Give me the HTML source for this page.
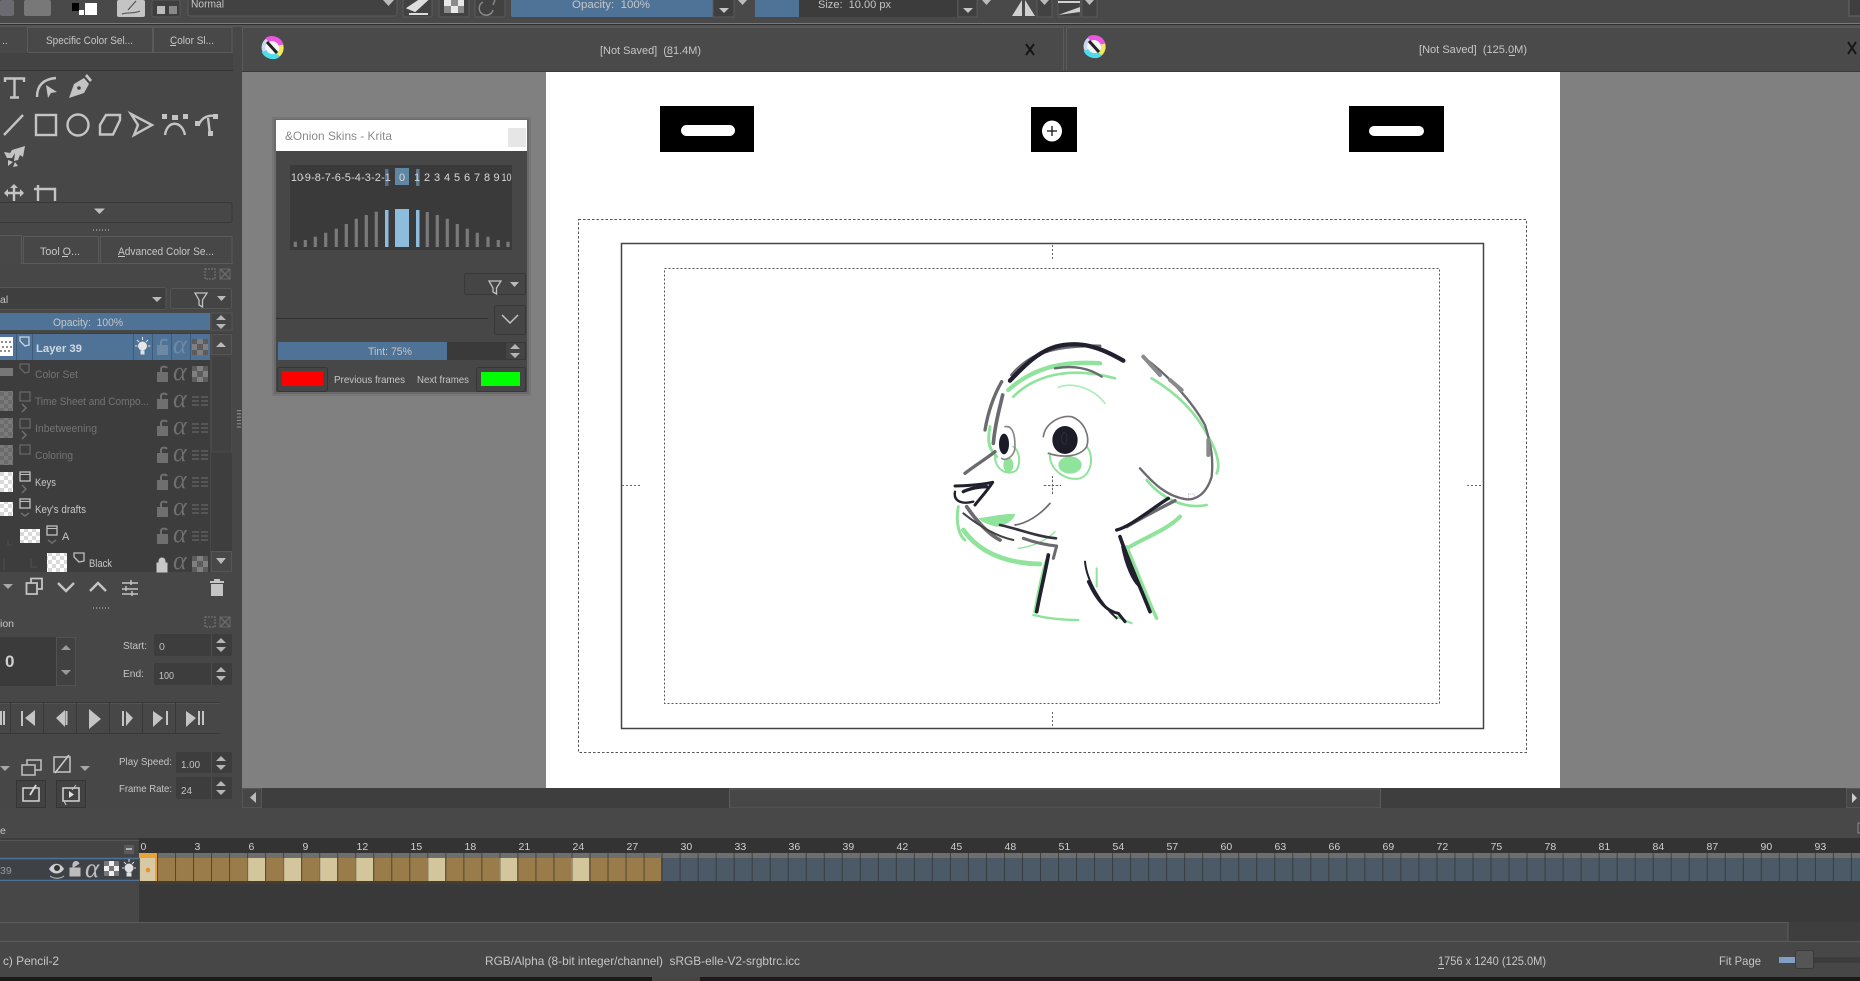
<!DOCTYPE html>
<html lang="en"><head><meta charset="utf-8"><title>Krita - Onion Skins</title>
<style>
html,body{margin:0;padding:0;background:#474747;width:1860px;height:981px;overflow:hidden}
svg{display:block}
svg.root{filter:blur(.35px)}
text{font-family:"Liberation Sans",sans-serif;font-size:11px;fill:#c6c6c6}
.d{fill:#747474}.w{fill:#d8d8d8}.s{font-size:10.5px}
.ic{fill:none;stroke:#c4c4c4;stroke-width:2.4}
.icf{fill:#c4c4c4}
.dims{fill:none;stroke:#6f6f6f;stroke-width:1.5}
.r{font-size:10.5px;fill:#cfcfcf}
.al{font-family:"Liberation Serif",serif;font-size:26px;font-style:italic;fill:#6f6f6f}
.g{fill:none;stroke:#8fe39a;stroke-linecap:round;stroke-linejoin:round}
.k{fill:none;stroke:#20202e;stroke-linecap:round;stroke-linejoin:round}
.h{fill:none;stroke:#6a6a70;stroke-linecap:round;stroke-linejoin:round}
</style></head><body>
<svg class="root" width="1860" height="981" viewBox="0 0 1860 981" xmlns="http://www.w3.org/2000/svg">
<defs>
<pattern id="chk" width="8" height="8" patternUnits="userSpaceOnUse"><rect width="8" height="8" fill="#fff"/><rect width="4" height="4" fill="#d9d9d9"/><rect x="4" y="4" width="4" height="4" fill="#d9d9d9"/></pattern>
<pattern id="chd" width="8" height="8" patternUnits="userSpaceOnUse"><rect width="8" height="8" fill="#7a7a7a"/><rect width="4" height="4" fill="#6c6c6c"/><rect x="4" y="4" width="4" height="4" fill="#6c6c6c"/></pattern>
<pattern id="cell" x="139" y="0" width="18.02" height="10" patternUnits="userSpaceOnUse"><rect x="0" width="1" height="10" fill="#2f2f2f" opacity=".7"/></pattern>
<g id="pat"><rect width="16" height="16" fill="#5c5c5c"/><rect x="5" width="6" height="5" fill="#808080"/><rect y="5" width="5" height="6" fill="#808080"/><rect x="11" y="5" width="5" height="6" fill="#808080"/><rect x="5" y="11" width="6" height="5" fill="#808080"/></g>
<g id="lines"><path d="M0 3h7M9 3h7M0 7h7M9 7h7M0 11h7M9 11h7" stroke="#666" stroke-width="1.300" fill="none"/></g>
<g id="lock"><path d="M1 6h11v10H1z" fill="#6f6f6f"/><path d="M5 6V3c0-3 5-3 6-1" fill="none" stroke="#6f6f6f" stroke-width="2"/></g>
<g id="lock2"><path d="M1 6h11v10H1z" fill="#6f89a5"/><path d="M5 6V3c0-3 5-3 6-1" fill="none" stroke="#6f89a5" stroke-width="2"/></g>
<g id="logo"><circle r="9.500" fill="#f4f4f4"/><path d="M-5-8A9.500 9.500 0 0 1 9-3" stroke="#ec55dd" stroke-width="5" fill="none"/><path d="M9-3A9.500 9.500 0 0 1 6 7" stroke="#f0e860" stroke-width="4.500" fill="none"/><path d="M6 7A9.500 9.500 0 0 1-8 3" stroke="#4fdcea" stroke-width="5" fill="none"/><path d="M-8 3A9.500 9.500 0 0 1-5-8" stroke="#c9d8ef" stroke-width="3.500" fill="none"/><path d="M-5-6L5 5" stroke="#222" stroke-width="3"/></g>
<g id="dots"><path d="M0 0h1M3 0h1M6 0h1M9 0h1M12 0h1M15 0h1" stroke="#8a8a8a" stroke-width="2"/></g>
<g id="float"><rect x="-5" y="-5" width="10" height="10" fill="none" stroke="#6a6a6a" stroke-width="1.500" stroke-dasharray="2 1"/><path d="M10-5L20 5M20-5L10 5" stroke="#6a6a6a" stroke-width="1.500"/><rect x="10" y="-5" width="10" height="10" fill="none" stroke="#6a6a6a"/></g>
<g id="spin"><path d="M-5-2L0-7L5-2zM-5 2L0 7L5 2z" fill="#b5b5b5"/></g>
</defs>

<!-- base -->
<rect width="1860" height="981" fill="#474747"/>

<!-- canvas surround -->
<rect x="242" y="72" width="1618" height="716" fill="#808080"/>
<rect x="546" y="72" width="1014" height="716" fill="#fff"/>

<!-- top toolbar -->
<rect width="1860" height="23" fill="#494949"/>
<rect y="23" width="1860" height="1" fill="#7a7a7a"/>
<rect y="24" width="1860" height="1" fill="#2f2f2f"/>
<rect y="25" width="1860" height="2" fill="#555"/>
<rect x="0" y="0" width="14" height="16" rx="2" fill="#6a6a70"/>
<rect x="24" y="0" width="27" height="16" rx="2" fill="#787878"/>
<rect x="72" y="3" width="7" height="8" fill="#000"/><rect x="79" y="10" width="5" height="5" fill="#fff"/><rect x="85" y="3" width="12" height="12" fill="#fff"/>
<rect x="117" y="0" width="28" height="17" rx="2" fill="#c4c4c4"/><path d="M122 14c6-2 12 0 18-3M128 10L136 1" stroke="#555" fill="none" stroke-width="1.200"/>
<rect x="152" y="0" width="28" height="17" rx="2" fill="#3f3f3f" stroke="#5a5a5a"/><rect x="157" y="6" width="8" height="8" fill="#bbb"/><rect x="169" y="6" width="8" height="8" fill="#888"/>
<rect x="188" y="-1" width="209" height="17" rx="2" fill="#424242" stroke="#5a5a5a"/>
<text x="191" y="7.500" textLength="33" lengthAdjust="spacingAndGlyphs">Normal</text>
<path d="M383 0h11l-5.500 6z" fill="#bbb"/>
<rect x="403" y="-1" width="29" height="18" rx="2" fill="#424242" stroke="#5a5a5a"/><path d="M408 8L420 0h7L415 11zM409 14h19" stroke="#ddd" stroke-width="2" fill="#ddd"/>
<rect x="439" y="-1" width="30" height="18" rx="2" fill="#424242" stroke="#5a5a5a"/><path d="M444 0h7v6h-7zM458 0h6v6h-6zM451 6h7v7h-7z" fill="#e8e8e8"/><path d="M451 0h7v6h-7zM444 6h7v7h-7zM458 6h6v7h-6z" fill="#8a8a8a"/>
<rect x="475" y="-1" width="30" height="18" rx="2" fill="#424242" stroke="#5a5a5a"/><path d="M483 2a7 7 0 1 0 10 8M493 5l2-5" stroke="#888" fill="none" stroke-width="1.500"/>
<rect x="511" y="-1" width="202" height="18" rx="2" fill="#4f7396"/>
<rect x="713" y="-1" width="21" height="18" fill="#3f3f3f" stroke="#5a5a5a"/><path d="M719 8h10l-5 5z" fill="#c5c5c5"/>
<text x="572" y="8" textLength="78" lengthAdjust="spacingAndGlyphs" fill="#e0e0e0">Opacity:&#160;&#160;100%</text>
<path d="M738 0h9l-4.500 5z" fill="#bbb"/>
<rect x="755" y="-1" width="44" height="18" fill="#4f7396"/>
<rect x="799" y="-1" width="158" height="18" fill="#3c3c3c"/>
<rect x="958" y="-1" width="19" height="18" fill="#3f3f3f" stroke="#5a5a5a"/><path d="M963 8h10l-5 5z" fill="#c5c5c5"/>
<text x="818" y="8" textLength="73" lengthAdjust="spacingAndGlyphs">Size:&#160;&#160;10.00 px</text>
<path d="M982 0h9l-4.500 5z" fill="#bbb"/>
<path d="M1012 16L1022 0V16zM1025 0L1035 16H1025z" fill="#d0d0d0"/>
<rect x="1037" y="-1" width="15" height="18" fill="#424242" stroke="#5a5a5a"/><path d="M1040 0h9l-4.500 5z" fill="#bbb"/>
<rect x="1058" y="-1" width="22" height="18" fill="#424242" stroke="#5a5a5a"/><path d="M1058 15L1080 7V12zM1058 1H1080V3H1058z" fill="#d0d0d0"/>
<rect x="1082" y="-1" width="15" height="18" fill="#424242" stroke="#5a5a5a"/><path d="M1085 0h9l-4.500 5z" fill="#bbb"/>
<rect x="1849" y="-1" width="14" height="17" fill="#3f3f3f" stroke="#666"/>

<!-- left docker tabs -->
<rect x="0" y="27" width="233" height="26" fill="#484848"/>
<path d="M27.500 27V52M152.500 27V52M153.500 27V52" stroke="#5a5a5a"/>
<path d="M28 27.500H232V52.500H28" stroke="#5a5a5a" fill="none"/>
<rect x="0" y="53" width="233" height="17" fill="#434343"/>
<path d="M0 70.500H233" stroke="#333"/>
<text x="46" y="44" textLength="87" lengthAdjust="spacingAndGlyphs">Specific Color Sel...</text>
<text x="170" y="44" textLength="44" lengthAdjust="spacingAndGlyphs">Color Sl...</text>
<path d="M170 45.500h6" stroke="#c6c6c6"/>
<text x="2" y="44" class="s">..</text>

<!-- doc tabs -->
<rect x="242" y="27" width="1618" height="45" fill="#4a4a4a"/>
<path d="M242.500 72V27.500H1063.500V72M1066.500 72V27.500H1860" fill="none" stroke="#5a5a5a"/>
<path d="M242 71.500H1860" stroke="#3a3a3a"/>
<use href="#logo" transform="translate(272 48)"/>
<use href="#logo" transform="translate(1094 47)"/>
<text x="600" y="54" textLength="101" lengthAdjust="spacingAndGlyphs">[Not Saved]&#160;&#160;(81.4M)</text>
<path d="M665.500 56.500h7" stroke="#c6c6c6"/>
<text x="1419" y="53" textLength="108" lengthAdjust="spacingAndGlyphs">[Not Saved]&#160;&#160;(125.0M)</text>
<path d="M1509 55.500h6" stroke="#c6c6c6"/>
<path d="M1026 44L1034 55M1034 44L1026 55" stroke="#161616" stroke-width="2"/>
<path d="M1848 42L1856 54M1856 42L1848 54" stroke="#161616" stroke-width="2"/>

<!-- tool icons -->
<path class="ic" d="M5 82V78.500H24V82M14.500 78.500V97M10 97.500H19"/>
<path class="ic" d="M37 97C37 85 44 79 56 78"/><path class="icf" d="M46 85L57 92L51 93L48 98z"/>
<path class="icf" d="M69 98L74 84L84 78L89 84L84 93zM85 76L90 82L92 80L87 74z"/><circle cx="79" cy="88" r="1.800" fill="#444"/>
<path class="ic" d="M4 135L23 115"/>
<rect class="ic" x="36" y="115" width="20" height="20"/>
<circle class="ic" cx="78" cy="125" r="10.500"/>
<path class="ic" d="M100 134.500H113L120 120V115H106L100 125z"/>
<path class="ic" d="M131 114L152 125L134 135L138 125z"/>
<path class="ic" d="M165 135C167 120 182 120 185 135"/><path class="icf" d="M162 114h5v5h-5zM172 115h6v5h-6zM183 114h5v5h-5z"/>
<path class="ic" d="M199 124C203 116 210 115 215 116M208 118L210 134"/><path class="icf" d="M195 121h5v5h-5zM213 114h5v5h-5zM208 131h5v5h-5z"/>
<path class="icf" d="M25 146L12 150L7 158L12 158L15 153L14 161L18 160L20 155L23 157zM4 152l6 1-3 5zM8 160l5 2-5 4zM15 162l3 4-5 1z"/>
<path class="ic" d="M14 185V201M5 193H23"/><path class="icf" d="M14 184l4 4h-8zM4 193l4-4v8zM24 193l-4-4v8z"/>
<path class="ic" d="M38 185V201M34 189H55V201"/>

<!-- scroll button -->
<rect x="-2" y="202.500" width="234" height="20" rx="2" fill="#474747" stroke="#383838"/>
<path d="M94 208.500h11l-5.500 5.500z" fill="#bdbdbd"/>
<use href="#dots" transform="translate(93 230)"/>

<!-- second tabs -->
<rect x="0" y="263" width="233" height="1" fill="#5a5a5a"/>
<path d="M21.500 263V235.500H0M23.500 263V236.500H98.500V263M100.500 263V236.500H232V263" stroke="#5a5a5a" fill="none"/>
<rect x="0" y="236" width="21" height="28" fill="#484848"/>
<text x="40" y="255" textLength="40" lengthAdjust="spacingAndGlyphs">Tool O...</text>
<text x="118" y="255" textLength="96" lengthAdjust="spacingAndGlyphs">Advanced Color Se...</text>
<path d="M118 256.500h7M62 256.500h6" stroke="#c6c6c6"/>
<use href="#float" transform="translate(210 274)"/>

<!-- combo -->
<rect x="-2" y="287.500" width="168" height="22" rx="2" fill="#3f3f3f" stroke="#555"/>
<text x="0" y="303" class="s">al</text>
<path d="M152 297h10l-5 5z" fill="#bbb"/>
<rect x="170.500" y="288.500" width="61" height="20" rx="2" fill="#444" stroke="#555"/>
<path d="M195 293H207L202.500 300V307L199 305V300z" fill="none" stroke="#c2c2c2" stroke-width="1.300"/>
<path d="M217 296h9l-4.500 5z" fill="#bbb"/>

<!-- opacity -->
<rect x="0" y="313" width="210" height="17" fill="#4f7396"/>
<rect x="211" y="313" width="21" height="17" fill="#444" stroke="#555"/>
<use href="#spin" transform="translate(221 322)"/>
<text x="53" y="326" textLength="70" lengthAdjust="spacingAndGlyphs" fill="#e0e0e0">Opacity:&#160;&#160;100%</text>

<!-- layer list -->
<rect x="0" y="333" width="210" height="239" fill="#3d3d3d"/>
<rect x="0" y="334" width="210" height="26" fill="#4f7396"/>
<path d="M16.500 334V360M32.500 334V360M133.500 334V360M152.500 334V360M171.500 334V360M190.500 334V360" stroke="#3d5a78"/>
<rect x="211" y="333" width="21" height="239" fill="#3e3e3e"/>
<rect x="211.500" y="334.500" width="20" height="20" fill="#484848" stroke="#555"/><path d="M216 347h10l-5-5z" fill="#bbb"/>
<rect x="211.500" y="356" width="20" height="96" fill="#414141" stroke="#4a4a4a"/>
<rect x="211.500" y="551.500" width="20" height="20" fill="#484848" stroke="#555"/><path d="M216 558h10l-5 6z" fill="#bbb"/>
<rect x="0" y="337" width="13" height="19" fill="#fff"/><path d="M1 342h11M2 347h10M0 351h12" stroke="#222" stroke-dasharray="2 2"/>
<rect x="0" y="368" width="13" height="8" fill="#777"/>
<rect x="0" y="391" width="13" height="20" fill="url(#chd)"/>
<rect x="0" y="418" width="13" height="20" fill="url(#chd)"/>
<rect x="0" y="445" width="13" height="20" fill="url(#chd)"/>
<rect x="0" y="472" width="13" height="20" fill="url(#chk)"/>
<rect x="0" y="502" width="13" height="14" fill="url(#chk)"/>
<rect x="20" y="529" width="20" height="14" fill="url(#chk)"/>
<rect x="47" y="553" width="20" height="19" fill="url(#chk)"/>
<!-- layer icons -->
<path d="M20 337H29V345L25 346L20 341z" fill="none" stroke="#c8d4e0" stroke-width="1.300"/>
<path d="M20 364H29V372L25 373L20 368z" fill="none" stroke="#666" stroke-width="1.300"/>
<rect x="20" y="392" width="10" height="9" fill="none" stroke="#666" stroke-width="1.300"/><path d="M22 404l4 4-4 4" class="dims"/>
<rect x="20" y="419" width="10" height="9" fill="none" stroke="#666" stroke-width="1.300"/><path d="M22 431l4 4-4 4" class="dims"/>
<rect x="20" y="445" width="10" height="9" fill="none" stroke="#666" stroke-width="1.300"/>
<rect x="20" y="472" width="10" height="9" fill="none" stroke="#c0c0c0" stroke-width="1.300"/><path d="M20 474.500H30" stroke="#c0c0c0"/><path d="M22 485l4 4-4 4" class="dims"/>
<rect x="20" y="499" width="10" height="9" fill="none" stroke="#c0c0c0" stroke-width="1.300"/><path d="M20 501.500H30" stroke="#c0c0c0"/><path d="M21 513l4 3 4-3" class="dims"/>
<rect x="47" y="526" width="10" height="9" fill="none" stroke="#c0c0c0" stroke-width="1.300"/><path d="M47 528.500H57" stroke="#c0c0c0"/><path d="M48 540l4 3 4-3" class="dims"/>
<path d="M74 553H84V561L79 562L74 557z" fill="none" stroke="#c0c0c0" stroke-width="1.300"/>
<path d="M8 540V545H12M4 558V570M31 558V567H37" stroke="#4e4e4e" fill="none"/>
<!-- layer labels -->
<text x="36" y="352" textLength="46" lengthAdjust="spacingAndGlyphs" style="font-weight:bold;font-size:11px;fill:#d0d8e0">Layer 39</text>
<text x="35" y="378" class="d" textLength="43" lengthAdjust="spacingAndGlyphs">Color Set</text>
<text x="35" y="405" class="d" textLength="114" lengthAdjust="spacingAndGlyphs">Time Sheet and Compo...</text>
<text x="35" y="432" class="d" textLength="62" lengthAdjust="spacingAndGlyphs">Inbetweening</text>
<text x="35" y="459" class="d" textLength="38" lengthAdjust="spacingAndGlyphs">Coloring</text>
<text x="35" y="486" textLength="21" lengthAdjust="spacingAndGlyphs">Keys</text>
<text x="35" y="513" textLength="51" lengthAdjust="spacingAndGlyphs">Key's drafts</text>
<text x="62" y="540">A</text>
<text x="89" y="567" textLength="23" lengthAdjust="spacingAndGlyphs">Black</text>
<!-- row icons -->
<circle cx="142.500" cy="346" r="4.500" fill="#e6e6e6"/><path d="M141 351h3v3h-3zM142.500 337v3M135 346h2.500M148 346h2.500M137 340l2 2M148 340l-2 2" stroke="#e0e0e0" fill="#e0e0e0"/>
<use href="#lock2" transform="translate(156 339)"/>
<text x="173" y="353" class="al" style="fill:#6f89a5">α</text>
<use href="#pat" transform="translate(192 339)"/>
<use href="#lock" transform="translate(156 366)"/><text x="173" y="380" class="al">α</text><use href="#pat" transform="translate(192 366)"/>
<use href="#lock" transform="translate(156 393)"/><text x="173" y="407" class="al">α</text><use href="#lines" transform="translate(192 394)"/>
<use href="#lock" transform="translate(156 420)"/><text x="173" y="434" class="al">α</text><use href="#lines" transform="translate(192 421)"/>
<use href="#lock" transform="translate(156 447)"/><text x="173" y="461" class="al">α</text><use href="#lines" transform="translate(192 448)"/>
<use href="#lock" transform="translate(156 474)"/><text x="173" y="488" class="al">α</text><use href="#lines" transform="translate(192 475)"/>
<use href="#lock" transform="translate(156 501)"/><text x="173" y="515" class="al">α</text><use href="#lines" transform="translate(192 502)"/>
<use href="#lock" transform="translate(156 528)"/><text x="173" y="542" class="al">α</text><use href="#lines" transform="translate(192 529)"/>
<path d="M157 563h10v9h-10zM159 563v-2a3 3 0 0 1 6 0v2" fill="#c8c8c8" stroke="#c8c8c8"/><text x="173" y="569" class="al">α</text><use href="#pat" transform="translate(192 556)"/>

<!-- layer buttons -->
<path d="M3 584h10l-5 5z" fill="#a8a8a8"/>
<path class="ic" d="M31 583V578.500H42V589H37M26.500 583H37V594H26.500z" style="stroke-width:1.800"/>
<path class="ic" d="M58 583L66 591L74 583"/>
<path class="ic" d="M90 591L98 583L106 591"/>
<path class="ic" d="M122 583H138M122 589H138M122 594H138" style="stroke-width:1.600"/><path d="M131 580v5M126 586v5M132 591v5" stroke="#c4c4c4" stroke-width="1.500"/>
<path class="icf" d="M210 581h14v2h-14zM214 579h6v2h-6zM211 584h12v12h-12z"/>
<use href="#dots" transform="translate(93 608)"/>

<!-- animation -->
<text x="0" y="627" class="s">ion</text>
<use href="#float" transform="translate(210 622)"/>
<rect x="0" y="637" width="56" height="49" fill="#3b3b3b"/>
<text x="5" y="667" style="font-size:17px;font-weight:bold;fill:#cfcfcf">0</text>
<rect x="56.500" y="637.500" width="19" height="48" fill="#414141" stroke="#525252"/>
<path d="M61 650h10l-5-5zM61 670h10l-5 5z" fill="#9a9a9a"/>
<text x="123" y="649" textLength="24" lengthAdjust="spacingAndGlyphs" class="s">Start:</text>
<rect x="154" y="634" width="78" height="22" rx="2" fill="#3d3d3d"/>
<text x="159" y="650" class="s" style="fill:#bbb">0</text>
<use href="#spin" transform="translate(221 645)"/>
<path d="M211.500 634V656" stroke="#4d4d4d"/>
<text x="123" y="677" textLength="21" lengthAdjust="spacingAndGlyphs" class="s">End:</text>
<rect x="154" y="663" width="78" height="22" rx="2" fill="#3d3d3d"/>
<text x="159" y="679" textLength="15" lengthAdjust="spacingAndGlyphs" class="s">100</text>
<use href="#spin" transform="translate(221 674)"/>
<path d="M211.500 663V685" stroke="#4d4d4d"/>

<!-- playback -->
<path d="M0 702.500H220M0 733.500H220" stroke="#383838"/>
<path d="M0 703.500H220" stroke="#545454"/>
<path d="M10.500 703V733M43.500 703V733M76.500 703V733M109.500 703V733M142.500 703V733M175.500 703V733" stroke="#383838"/>
<path class="icf" d="M0 711h2v14h-2zM3 711h2v14h-2zM21 711h2v15h-2zM35 710V726L25 718zM56 718L65 710V727zM65.500 711H67.500V725H65.500zM89 709V729L101 719zM122 711H124V726H122zM126 711L133 718L126 726zM153 711L163 718L153 727zM166 711H168V725H166zM186 711L196 718L186 727zM198 711H200V725H198zM202 711H204V725H202z"/>

<!-- play options -->
<path d="M0 766h10l-5 5z" fill="#a8a8a8"/>
<rect x="27" y="760" width="14" height="10" fill="none" stroke="#bbb" stroke-width="1.600"/><rect x="22" y="765" width="13" height="10" fill="#474747" stroke="#bbb" stroke-width="1.600"/>
<rect x="54" y="757" width="16" height="15" fill="none" stroke="#bbb" stroke-width="1.600"/><path d="M55 773L69 755" stroke="#ccc" stroke-width="1.500"/>
<path d="M80 766h10l-5 5z" fill="#a8a8a8"/>
<rect x="16.500" y="780.500" width="29" height="27" fill="#424242" stroke="#353535"/>
<rect x="56.500" y="780.500" width="29" height="27" fill="#424242" stroke="#353535"/>
<rect x="23" y="788" width="16" height="13" fill="none" stroke="#ccc" stroke-width="1.600"/><path d="M30 795L36 785" stroke="#ddd" stroke-width="1.800"/>
<rect x="63" y="788" width="16" height="13" fill="none" stroke="#ccc" stroke-width="1.600"/><path d="M69 791L74 794.500L69 798z" fill="#ddd"/><path d="M72 790L76 785M64 801L66 805" stroke="#ccc"/>
<text x="119" y="765" textLength="53" lengthAdjust="spacingAndGlyphs" class="s">Play Speed:</text>
<rect x="176" y="752" width="56" height="21" rx="2" fill="#3d3d3d"/>
<text x="181" y="768" textLength="19" lengthAdjust="spacingAndGlyphs" class="s">1.00</text>
<use href="#spin" transform="translate(221 763)"/><path d="M211.500 752V773" stroke="#4d4d4d"/>
<text x="119" y="792" textLength="53" lengthAdjust="spacingAndGlyphs" class="s">Frame Rate:</text>
<rect x="176" y="777" width="56" height="22" rx="2" fill="#3d3d3d"/>
<text x="181" y="794" textLength="11" lengthAdjust="spacingAndGlyphs" class="s">24</text>
<use href="#spin" transform="translate(221 788)"/><path d="M211.500 777V799" stroke="#4d4d4d"/>
<use href="#dots" transform="translate(238 410) rotate(90) scale(1.100)"/>
<use href="#dots" transform="translate(240 410) rotate(90) scale(1.100)"/>

<!-- canvas contents -->
<rect x="660" y="106" width="94" height="46" fill="#000"/><rect x="681" y="125" width="54" height="11" rx="5.500" fill="#fff"/>
<rect x="1031" y="107" width="46" height="45" fill="#000"/><ellipse cx="1052" cy="131" rx="10" ry="10.500" fill="#fff"/><path d="M1047 131H1057M1052 126V136" stroke="#111" stroke-width="1.300"/>
<rect x="1349" y="106" width="95" height="46" fill="#000"/><rect x="1369" y="126" width="55" height="10" rx="5" fill="#fff"/>
<rect x="578.500" y="219.500" width="948" height="533" fill="none" stroke="#555" stroke-dasharray="2.500 2"/>
<rect x="621.500" y="243.500" width="862" height="485" fill="none" stroke="#444" stroke-width="1.500"/>
<rect x="664.500" y="268.500" width="775" height="435" fill="none" stroke="#555" stroke-dasharray="2 2"/>
<path d="M1052.500 245V260M1052.500 712V727M622 485.500H640M1467 485.500H1483M1052.500 476V494M1044 485.500H1061" stroke="#666" stroke-dasharray="2 2"/>

<!-- drawing -->
<svg x="930" y="310" width="320" height="330" viewBox="0 0 960 990">
<g class="g">
<path d="M235 240C290 190 370 150 510 160" stroke-width="13"/>
<path d="M250 260C320 190 430 170 555 205" stroke-width="8"/>
<path d="M385 232C430 215 490 235 525 280" stroke-width="5" opacity=".7"/>
<path d="M180 350C170 400 180 420 200 440" stroke-width="9"/>
<path d="M195 440C195 480 235 500 260 480C275 450 265 420 250 410" stroke-width="6"/>
<path d="M360 430C355 480 410 515 450 505C490 490 490 430 470 410" stroke-width="6"/>
<path d="M665 205C740 250 800 310 835 380C865 430 870 470 860 490" stroke-width="8"/>
<path d="M650 510C690 560 760 600 830 585" stroke-width="8"/>
<path d="M600 710C650 680 710 660 750 620" stroke-width="12"/>
<path d="M85 590C75 640 90 680 105 690" stroke-width="9"/>
<path d="M100 660C150 730 230 760 330 762" stroke-width="14"/>
<path d="M265 715C310 710 350 690 375 665" stroke-width="4"/>
<path d="M350 750C330 810 320 880 315 905" stroke-width="10"/>
<path d="M310 915C350 925 400 930 445 930" stroke-width="7"/>
<path d="M590 710C620 780 650 860 680 925" stroke-width="10"/>
<path d="M500 775L500 830M560 920L605 940" stroke-width="6"/>
</g>
<ellipse cx="235" cy="465" rx="15" ry="22" fill="#8fe39a"/>
<ellipse cx="420" cy="465" rx="35" ry="26" fill="#8fe39a"/>
<path d="M145 625C180 620 230 610 255 612C255 630 220 650 200 650C180 645 160 640 145 625z" fill="#8fe39a"/>
<g class="h">
<path d="M245 195C300 130 370 105 510 108" stroke-width="9"/>
<path d="M375 175C430 165 480 175 515 200" stroke-width="7"/>
<path d="M165 360C175 300 195 250 215 215" stroke-width="10"/>
<path d="M190 400C195 340 210 290 218 255" stroke-width="11"/>
<path d="M225 350C250 345 255 380 255 410C255 440 225 455 215 445" stroke-width="5" stroke="#888"/>
<path d="M340 380C345 340 390 315 425 320C465 335 480 380 470 410C450 440 400 445 355 430" stroke-width="5" stroke="#777"/>
<path d="M105 490C130 470 170 445 195 425" stroke-width="10"/>
<path d="M110 590C130 620 170 670 210 690" stroke-width="11"/>
<path d="M255 645C290 640 330 615 360 580" stroke-width="5"/>
<path d="M280 685C320 700 350 705 380 708L370 745" stroke-width="9"/>
<path d="M630 475C670 520 710 560 770 568C800 570 830 550 845 500C850 450 845 410 825 345C790 280 720 200 645 145" stroke-width="7"/>
<path d="M640 140L690 195M720 210L755 240M835 390L835 435" stroke-width="12" stroke="#8a8a8a"/>
<path d="M590 650C640 620 700 590 735 572" stroke-width="10"/>
</g>
<g class="k">
<path d="M240 212C280 170 330 115 400 105C450 98 500 105 580 152" stroke-width="13"/>
<path d="M75 528C100 528 150 525 188 517C170 545 150 565 135 585" stroke-width="9"/>
<path d="M75 545C70 570 90 585 130 575" stroke-width="7"/>
<path d="M100 545C120 535 150 530 170 530" stroke-width="10"/>
<path d="M100 610C150 650 200 680 250 690" stroke-width="6" stroke="#444"/>
<path d="M210 645C260 655 320 680 378 685" stroke-width="8" stroke="#33333f"/>
<path d="M355 735C345 790 330 850 320 905" stroke-width="11"/>
<path d="M560 660C600 650 660 600 715 565" stroke-width="10"/>
<path d="M570 680C590 740 630 830 660 905" stroke-width="11"/>
<path d="M578 710C590 770 610 810 625 825" stroke-width="9"/>
<path d="M465 755C470 810 510 880 560 925" stroke-width="6"/>
<path d="M475 815C500 870 530 905 565 910L585 935" stroke-width="9"/>
</g>
<ellipse cx="222" cy="402" rx="15" ry="31" fill="#1a1a28"/>
<ellipse cx="405" cy="390" rx="38" ry="42" fill="#1c1c28"/>
<ellipse cx="403" cy="385" rx="8" ry="18" fill="none" stroke="#555"/>
<rect x="775" y="552" width="18" height="16" fill="none" stroke="#654f80" stroke-dasharray="3 2"/>
<path d="M367 500V555M340 527H395" stroke="#555" stroke-dasharray="4 3"/>
</svg>

<!-- onion skin dialog -->
<rect x="272" y="117" width="259" height="279" fill="#000" opacity=".08"/>
<rect x="274" y="119" width="255" height="275" fill="#000" opacity=".1"/>
<rect x="276" y="151" width="251" height="241" fill="#474747"/>
<rect x="276" y="120" width="251" height="31" fill="#fff"/>
<text x="285" y="140" textLength="107" lengthAdjust="spacingAndGlyphs" style="font-size:12px;fill:#8a8a8a">&amp;Onion Skins - Krita</text>
<rect x="508" y="128" width="18" height="19" fill="#e6e6e6"/>
<rect x="290" y="165" width="222" height="85" fill="#3a3a3a"/>
<rect x="385" y="169" width="3.500" height="17" fill="#4f7396"/>
<rect x="395" y="168" width="14" height="17" fill="#5d87a3"/>
<rect x="416" y="169" width="3.500" height="17" fill="#5d7a90"/>
<g style="text-anchor:middle">
<text x="297" y="181" class="w">10</text>
<text x="306" y="181" class="w">-9</text><text x="316" y="181" class="w">-8</text><text x="326" y="181" class="w">-7</text><text x="336" y="181" class="w">-6</text><text x="346" y="181" class="w">-5</text><text x="356" y="181" class="w">-4</text><text x="366" y="181" class="w">-3</text><text x="376" y="181" class="w">-2</text><text x="386" y="181" class="w">-1</text><text x="402" y="181" class="w">0</text><text x="417" y="181" class="w">1</text><text x="427" y="181" class="w">2</text><text x="437" y="181" class="w">3</text><text x="447" y="181" class="w">4</text><text x="457" y="181" class="w">5</text><text x="467" y="181" class="w">6</text><text x="477" y="181" class="w">7</text><text x="487" y="181" class="w">8</text><text x="496.500" y="181" class="w">9</text><text x="506.500" y="181" class="w" textLength="10" lengthAdjust="spacingAndGlyphs">10</text>
</g>
<path d="M295.300 247V241.700M305.300 247V240M315.300 247V236.700M325.700 247V232.700M336.300 247V228.700M346.300 247V224M356.300 247V218.700M366.300 247V215M376.300 247V211.700M427.300 247V212M437.300 247V215M447.300 247V218.700M457.300 247V224M467.300 247V228.700M477.300 247V232.700M488 247V236.700M498.300 247V240M508 247V241.700" stroke="#7a7a7a" stroke-width="3.200" fill="none"/>
<rect x="385" y="210" width="3.500" height="37" fill="#8ebcdc"/>
<rect x="395" y="209" width="14" height="38" fill="#8ebcdc"/>
<rect x="416" y="210" width="3.500" height="37" fill="#8ebcdc"/>
<rect x="464.500" y="273.500" width="61" height="21" rx="2" fill="#454545" stroke="#383838"/>
<path d="M489 281H501L496.500 288V294L493 292V288z" fill="none" stroke="#c2c2c2" stroke-width="1.300"/>
<path d="M510 282h9l-4.500 5z" fill="#bbb"/>
<path d="M276 318.500H488" stroke="#2e2e2e"/>
<rect x="494.500" y="305.500" width="31" height="29" rx="2" fill="#454545" stroke="#383838"/>
<path d="M502 315L510 323L518 315" fill="none" stroke="#c4c4c4" stroke-width="1.500"/>
<rect x="278" y="342" width="169" height="18" fill="#4f7396"/>
<rect x="447" y="342" width="58" height="18" fill="#3a3a3a"/>
<rect x="505.500" y="342.500" width="20" height="17" fill="#444" stroke="#383838"/>
<use href="#spin" transform="translate(515 351)"/>
<text x="368" y="355" textLength="44" lengthAdjust="spacingAndGlyphs" fill="#e0e0e0">Tint: 75%</text>
<rect x="277.500" y="367.500" width="50" height="24" rx="2" fill="#454545" stroke="#363636"/>
<rect x="282" y="371" width="41" height="15" fill="#f00"/>
<rect x="476.500" y="367.500" width="49" height="24" rx="2" fill="#454545" stroke="#363636"/>
<rect x="481" y="372" width="39" height="14" fill="#0f0"/>
<text x="334" y="383" textLength="71" lengthAdjust="spacingAndGlyphs" class="s">Previous frames</text>
<text x="417" y="383" textLength="52" lengthAdjust="spacingAndGlyphs" class="s">Next frames</text>

<!-- horizontal canvas scrollbar -->
<rect x="242" y="788" width="1618" height="20" fill="#3e3e3e"/>
<rect x="242.500" y="788.500" width="19" height="19" fill="#464646" stroke="#565656"/><path d="M256 792v11l-6-5.500z" fill="#bbb"/>
<rect x="729.500" y="789" width="651" height="19" fill="#474747" stroke="#5c5c5c"/>
<rect x="1846.500" y="788.500" width="14" height="19" fill="#464646" stroke="#565656"/><path d="M1852 793v10l5-5z" fill="#ccc"/>
<use href="#dots" transform="translate(920 814)"/>

<!-- timeline -->
<rect x="0" y="808" width="1860" height="30" fill="#484848"/>
<text x="0" y="834" class="s">e</text>
<rect x="1858" y="823" width="4" height="10" fill="none" stroke="#888"/>
<rect x="0" y="838" width="1860" height="2" fill="#3e3e3e"/>
<rect x="0" y="840" width="139" height="18" fill="#444"/>
<path d="M0 840.500H139" stroke="#555"/>
<rect x="124" y="845" width="10" height="9" fill="#5a5a5a"/><path d="M126 849h6" stroke="#ccc" stroke-width="1.500"/>
<rect x="139" y="838" width="1721" height="15" fill="#333"/>
<rect x="139" y="853" width="1721" height="5" fill="#6e6e6e"/>
<rect x="139" y="853" width="1721" height="5" fill="url(#cell)"/>
<rect x="0" y="858" width="139" height="23" fill="#3e4246"/>
<path d="M0 858.500H139M0 880.500H139" stroke="#4f7396" stroke-width="1.500"/>
<text x="0" y="874" class="s" style="fill:#999">39</text>
<path d="M49 869C53 862 60 862 64 869C60 875 53 875 49 869z" fill="#d0d0d0"/><circle cx="57" cy="868" r="3" fill="#333"/><path d="M50 876C54 879 60 879 64 876" stroke="#bbb" fill="none"/>
<path d="M70 868h10v8h-10zM73 868v-3a3 3 0 0 1 6-1" fill="#bdbdbd" stroke="#bdbdbd"/>
<text x="85" y="877" class="al" style="fill:#c0c0c0;font-size:27px">α</text>
<rect x="104" y="861" width="15" height="15" fill="#eee"/><path d="M104 861h5v5h-5zM114 861h5v5h-5zM109 866h5v5h-5zM104 871h5v5h-5zM114 871h5v5h-5z" fill="#777"/>
<circle cx="129" cy="868" r="4.500" fill="#e0e0e0"/><path d="M127 873h4v3h-4zM129 859v3M122 868h2M134 868h2M124 862l2 2M134 862l-2 2" stroke="#e0e0e0" fill="#e0e0e0"/>
<!-- frames -->
<rect x="139" y="858" width="522" height="23" fill="#9a7c4a"/>
<rect x="661" y="858" width="1199" height="23" fill="#4b5a66"/>
<path d="M247 858h18v23h-18zM283 858h18v23h-18zM319 858h18v23h-18zM355 858h18v23h-18zM427 858h18v23h-18zM499 858h18v23h-18zM571 858h18v23h-18z" fill="#d3c59c"/>
<rect x="139" y="858" width="18" height="23" fill="#d6c9a4"/>
<rect x="139" y="853" width="18" height="5" fill="#e8a23a"/>
<rect x="139" y="858" width="1" height="23" fill="#e8a23a"/><rect x="155" y="858" width="2" height="23" fill="#e8a23a"/>
<circle cx="148" cy="870" r="2.300" fill="#e8902a"/>
<rect x="139" y="858" width="1721" height="23" fill="url(#cell)"/>
<rect x="139" y="881" width="522" height="3" fill="#453d30"/>
<rect x="0" y="881" width="139" height="41" fill="#474747"/>
<rect x="139" y="884" width="1721" height="38" fill="#393939"/>
<rect x="661" y="881" width="1199" height="3" fill="#393939"/>
<text x="140.500" y="850" class="r">0</text><text x="194.500" y="850" class="r">3</text><text x="248.500" y="850" class="r">6</text><text x="302.500" y="850" class="r">9</text><text x="356.500" y="850" class="r">12</text><text x="410.500" y="850" class="r">15</text><text x="464.500" y="850" class="r">18</text><text x="518.500" y="850" class="r">21</text><text x="572.500" y="850" class="r">24</text><text x="626.500" y="850" class="r">27</text><text x="680.500" y="850" class="r">30</text><text x="734.500" y="850" class="r">33</text><text x="788.500" y="850" class="r">36</text><text x="842.500" y="850" class="r">39</text><text x="896.500" y="850" class="r">42</text><text x="950.500" y="850" class="r">45</text><text x="1004.500" y="850" class="r">48</text><text x="1058.500" y="850" class="r">51</text><text x="1112.500" y="850" class="r">54</text><text x="1166.500" y="850" class="r">57</text><text x="1220.500" y="850" class="r">60</text><text x="1274.500" y="850" class="r">63</text><text x="1328.500" y="850" class="r">66</text><text x="1382.500" y="850" class="r">69</text><text x="1436.500" y="850" class="r">72</text><text x="1490.500" y="850" class="r">75</text><text x="1544.500" y="850" class="r">78</text><text x="1598.500" y="850" class="r">81</text><text x="1652.500" y="850" class="r">84</text><text x="1706.500" y="850" class="r">87</text><text x="1760.500" y="850" class="r">90</text><text x="1814.500" y="850" class="r">93</text>

<!-- timeline scrollbar -->
<rect x="0" y="922" width="1788" height="20" fill="#474747"/>
<rect x="1788" y="922" width="72" height="20" fill="#3e3e3e"/>
<path d="M0 922.500H1788V942M0 941.500H1860" stroke="#5c5c5c" fill="none"/>

<!-- status bar -->
<rect x="0" y="942" width="1860" height="35" fill="#474747"/>
<text x="3" y="965" textLength="56" lengthAdjust="spacingAndGlyphs" style="font-size:12px">c) Pencil-2</text>
<text x="485" y="965" textLength="315" lengthAdjust="spacingAndGlyphs" style="font-size:12px">RGB/Alpha (8-bit integer/channel)&#160;&#160;sRGB-elle-V2-srgbtrc.icc</text>
<text x="1438" y="965" textLength="108" lengthAdjust="spacingAndGlyphs" style="font-size:12px">1756 x 1240 (125.0M)</text>
<path d="M1438 968.500h6" stroke="#c6c6c6"/>
<text x="1719" y="965" textLength="42" lengthAdjust="spacingAndGlyphs" style="font-size:12px">Fit Page</text>
<rect x="1779" y="957" width="16" height="6" fill="#7f9fc4"/>
<rect x="1795" y="957" width="65" height="6" fill="#3c3c3c"/>
<rect x="1795.500" y="950.500" width="18" height="18" rx="2" fill="#555" stroke="#3a3a3a"/>

<!-- bottom strip -->
<rect x="0" y="977" width="1860" height="4" fill="#1a1a18"/>
<rect x="652" y="977" width="48" height="4" fill="#4a4343"/>
<rect x="700" y="977" width="500" height="4" fill="#20181a"/>
</svg>
</body></html>
